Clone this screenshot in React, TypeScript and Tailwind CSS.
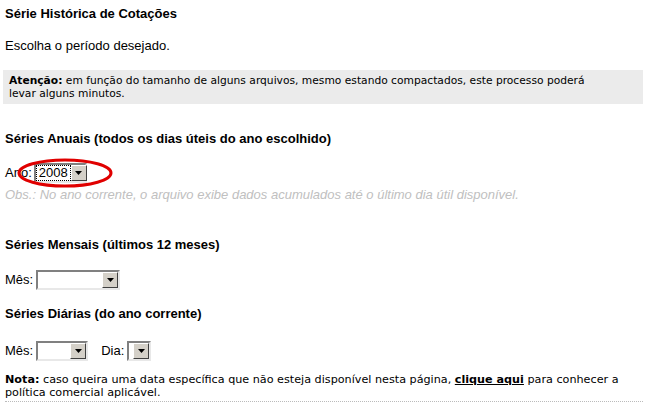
import React from 'react';

const Arrow: React.FC = () => (
  <div className="w-[16px] h-full bg-[#d4d0c8] border border-t-white border-l-white border-r-[#404040] border-b-[#404040] flex items-center justify-center shrink-0">
    <svg width="7" height="4" viewBox="0 0 7 4">
      <path d="M0 0 L7 0 L3.5 4 Z" fill="#000" />
    </svg>
  </div>
);

const Select: React.FC<{ width: string; value?: string; focused?: boolean }> = ({ width, value, focused }) => (
  <div className={`${width} h-[20px] bg-white border-2 border-t-[#808080] border-l-[#808080] border-r-[#e8e8e8] border-b-[#e8e8e8] flex p-0`}>
    <div className="flex-1 flex items-center pl-[1px] pr-[1px]">
      {value && (
        <span className={`text-[13px] leading-[14px] px-[2px] ${focused ? 'outline outline-1 outline-dotted outline-black' : ''}`}>
          {value}
        </span>
      )}
    </div>
    <Arrow />
  </div>
);

const App: React.FC = () => {
  return (
    <div className="w-[647px] h-[404px] bg-white overflow-hidden font-['Liberation_Sans',Arial,sans-serif] text-black relative">
      <div className="pl-[5px] pr-[4px] pt-[6px]">
        <h1 className="text-[13px] font-bold leading-[16px]">Série Histórica de Cotações</h1>
        <p className="text-[13px] leading-[16px] mt-[16px]">Escolha o período desejado.</p>

        <div className="mt-[16px] -ml-[2px] bg-[#ebebeb] pl-[6px] pr-[36px] py-[4px] font-['DejaVu_Sans',Verdana,sans-serif] text-[10.7px] leading-[13px]">
          <b>Atenção:</b> em função do tamanho de alguns arquivos, mesmo estando compactados, este processo poderá levar alguns minutos.
        </div>

        <h2 className="text-[13px] font-bold leading-[16px] mt-[27px]">Séries Anuais (todos os dias úteis do ano escolhido)</h2>

        <div className="relative flex items-center gap-[2px] mt-[16px] text-[13px]">
          <span>Ano:</span>
          <Select width="w-[53px]" value="2008" focused />
          <svg className="absolute left-[10px] top-[-6px]" width="100" height="32" viewBox="0 0 100 32">
            <ellipse cx="50" cy="16" rx="46" ry="13" fill="none" stroke="#e00000" strokeWidth="3" />
          </svg>
        </div>
        <p className="text-[13px] italic text-[#c0c0c0] leading-[16px] mt-[4px]">
          Obs.: No ano corrente, o arquivo exibe dados acumulados até o último dia útil disponível.
        </p>

        <h2 className="text-[13px] font-bold leading-[16px] mt-[34px]">Séries Mensais (últimos 12 meses)</h2>
        <div className="flex items-center gap-[3px] mt-[17px] text-[13px]">
          <span>Mês:</span>
          <Select width="w-[84px]" />
        </div>

        <h2 className="text-[13px] font-bold leading-[16px] mt-[16px]">Séries Diárias (do ano corrente)</h2>
        <div className="flex items-center gap-[3px] mt-[19px] text-[13px]">
          <span>Mês:</span>
          <Select width="w-[52px]" />
          <span className="ml-[10px]">Dia:</span>
          <Select width="w-[24px]" />
        </div>

        <div className="mt-[12px] font-['DejaVu_Sans',Verdana,sans-serif] text-[11.2px] leading-[13px] pb-[2px] border-b border-dotted border-[#bbbbbb]">
          <b>Nota:</b> caso queira uma data específica que não esteja disponível nesta página,{' '}
          <a href="#" className="font-bold underline text-black">clique aqui</a> para conhecer a política comercial aplicável.
        </div>
      </div>
    </div>
  );
};

export default App;
